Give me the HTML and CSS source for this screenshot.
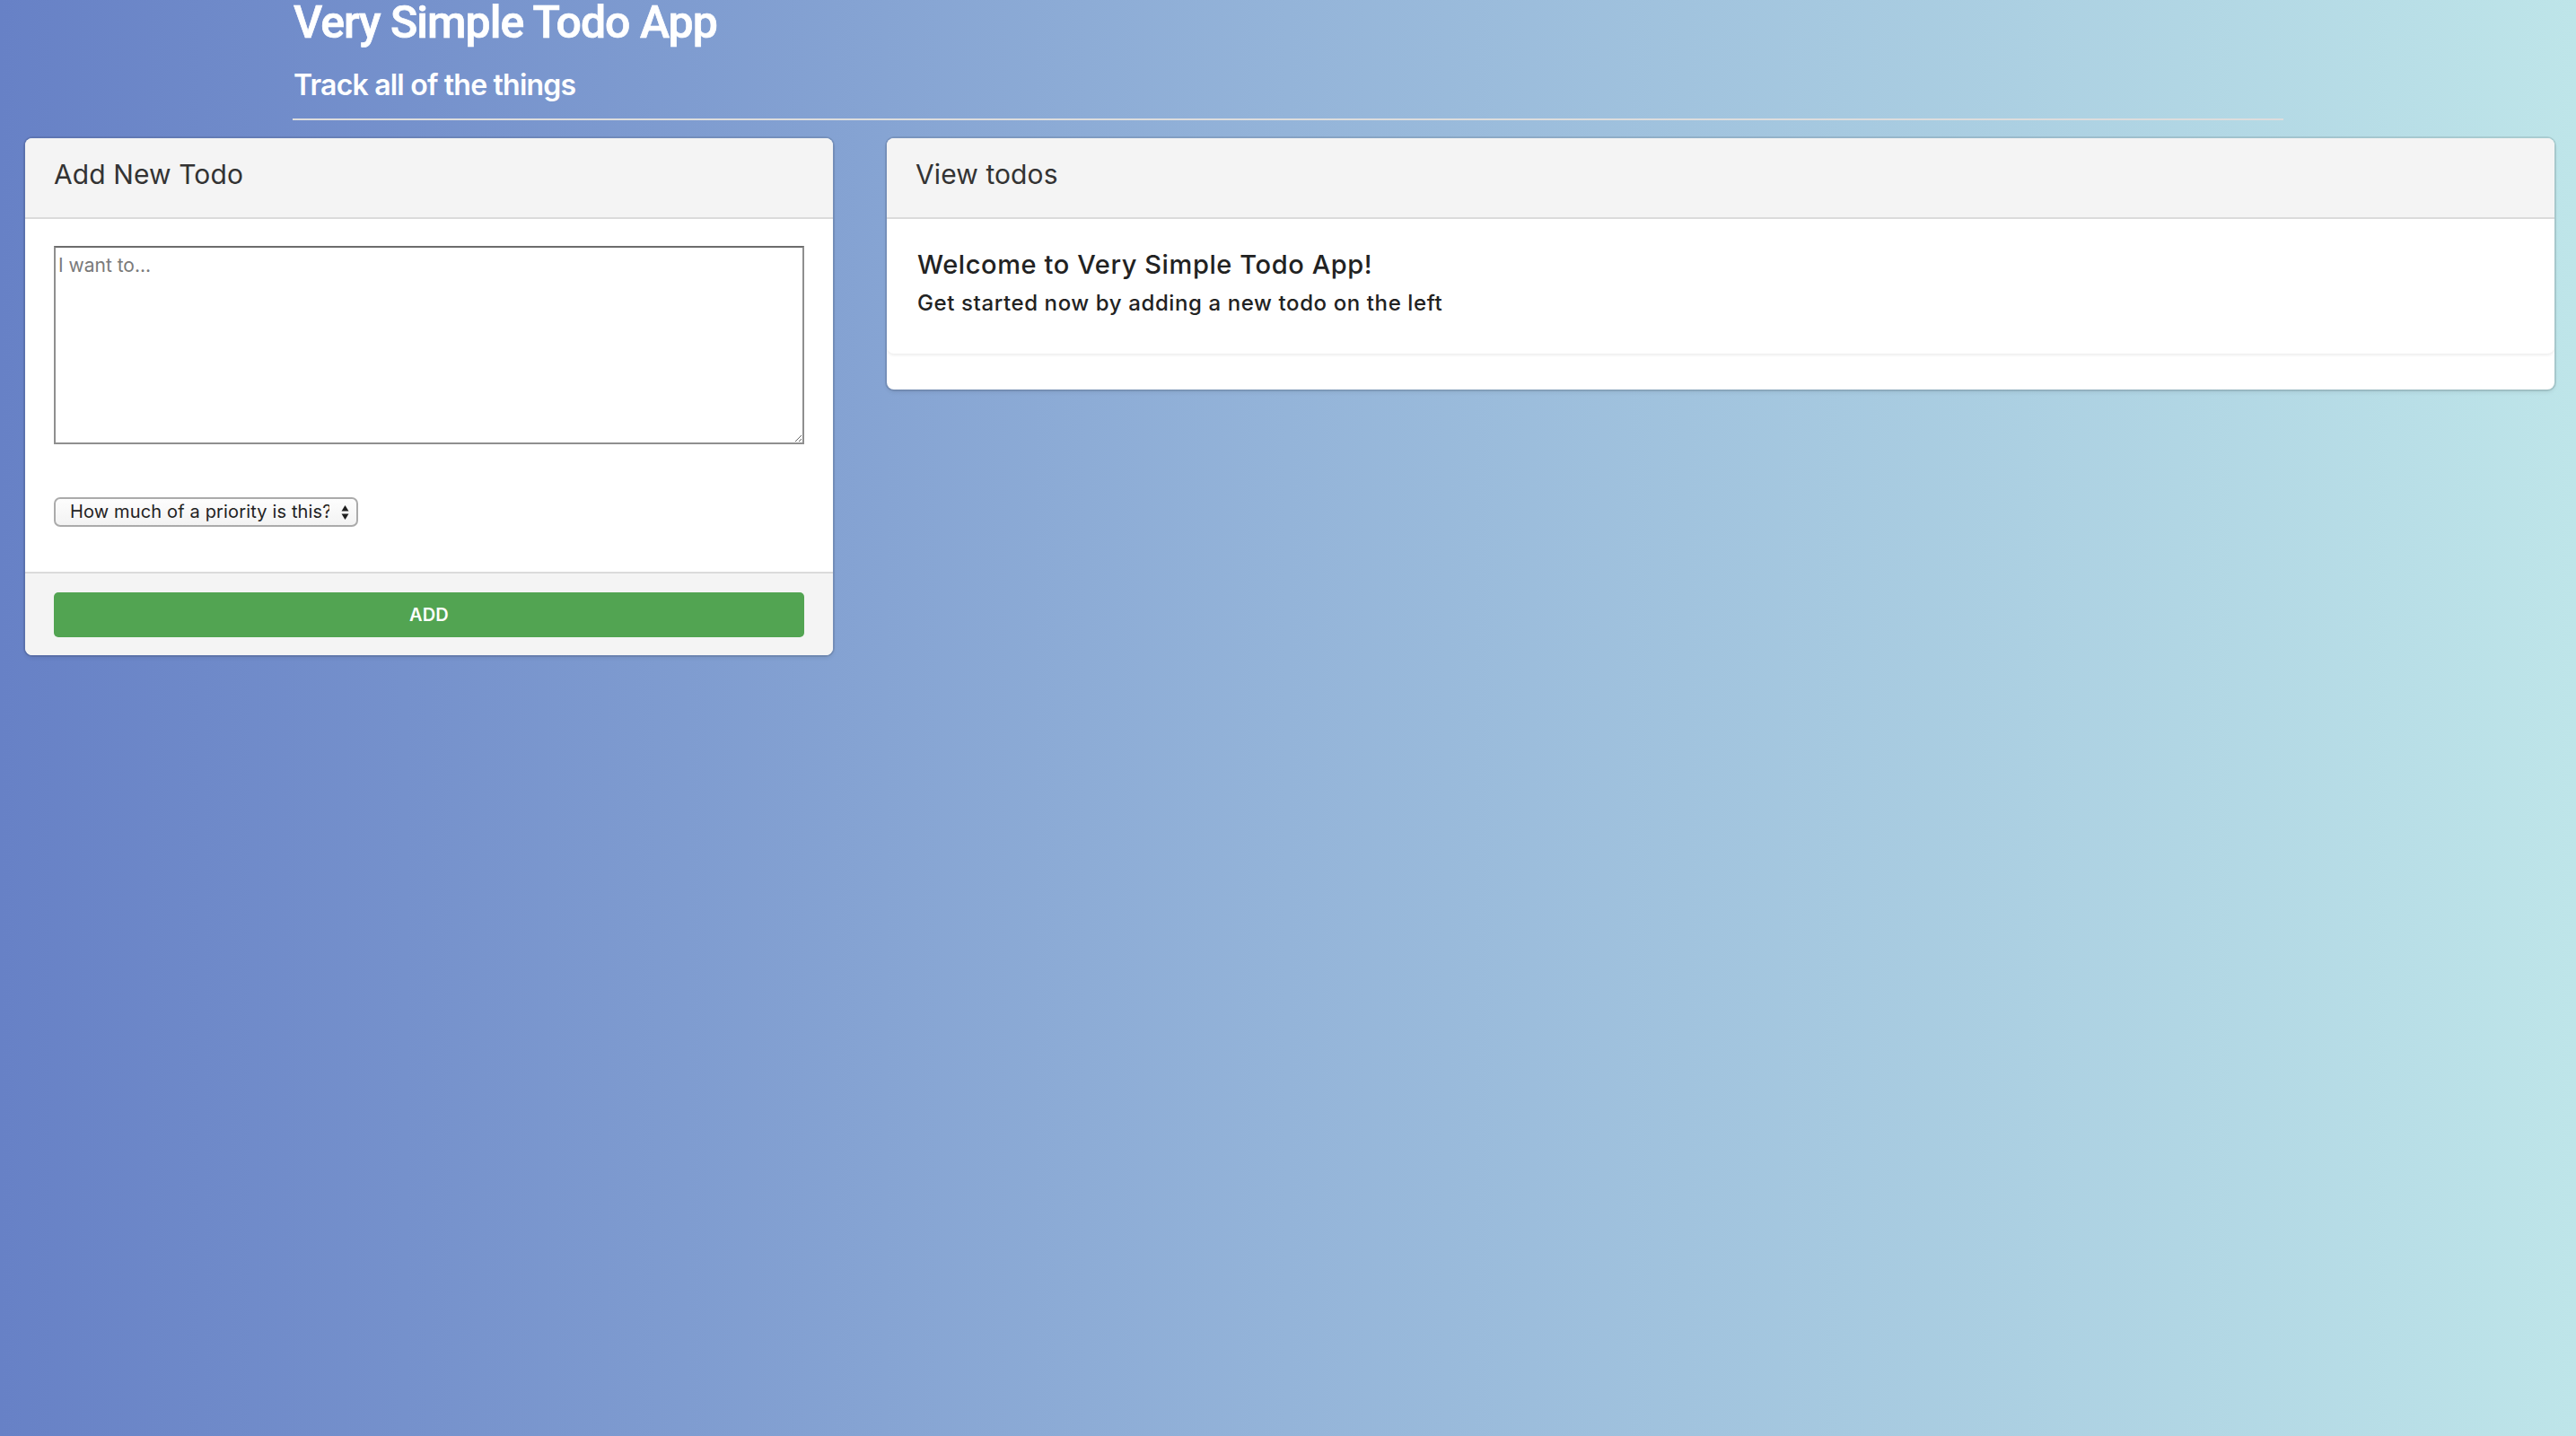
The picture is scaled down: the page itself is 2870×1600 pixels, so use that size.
FILE: index.html
```html
<!DOCTYPE html>
<html lang="en">
<head>
<meta charset="utf-8">
<title>Very Simple Todo App</title>
<link rel="stylesheet" href="styles.css">
</head>
<body>
  <header class="masthead">
    <h1 class="title">Very Simple Todo App</h1>
    <h2 class="subtitle">Track all of the things</h2>
    <hr class="rule">
  </header>
  <main class="columns">
    <section class="card card-add">
      <header class="card-header">
        <p class="card-header-title">Add New Todo</p>
      </header>
      <div class="card-content">
        <textarea class="todo-input" placeholder="I want to..."></textarea>
        <div class="select-wrap">
          <select class="priority">
            <option>How much of a priority is this?</option>
            <option>Low</option>
            <option>Medium</option>
            <option>High</option>
          </select>
          <svg class="select-arrows" width="9" height="18" viewBox="0 0 9 18" aria-hidden="true">
            <path d="M4.5 1 L8.5 7.5 L0.5 7.5 Z" fill="#1f1f1f"/>
            <path d="M4.5 17 L8.5 10.5 L0.5 10.5 Z" fill="#1f1f1f"/>
          </svg>
        </div>
      </div>
      <footer class="card-footer">
        <button class="btn-add" type="button">ADD</button>
      </footer>
    </section>
    <section class="card card-view">
      <header class="card-header">
        <p class="card-header-title">View todos</p>
      </header>
      <div class="welcome-box">
        <p class="welcome-title">Welcome to Very Simple Todo App!</p>
        <p class="welcome-text">Get started now by adding a new todo on the left</p>
      </div>
      <div class="card-spacer"></div>
    </section>
  </main>
</body>
</html>
```
FILE: styles.css
```css
* { box-sizing: border-box; }

html, body {
  margin: 0;
  padding: 0;
}

body {
  min-height: 1600px;
  background: linear-gradient(to right, #6781c6 0%, #94b4d9 50%, #bee5e9 100%);
  font-family: Inter, "Noto Sans", sans-serif;
  color: #363636;
}

.masthead {
  width: 2218px;
  margin: 0 auto;
  padding-left: 1px;
}

.title {
  margin: 0;
  font-family: Roboto, "Liberation Sans", sans-serif;
  font-weight: 500;
  font-size: 50px;
  line-height: 50px;
  letter-spacing: -1px;
  color: #ffffff;
  -webkit-text-stroke: 0.7px #ffffff;
}

.subtitle {
  margin: 25px 0 0;
  font-family: Inter, sans-serif;
  font-weight: 600;
  font-size: 32px;
  line-height: 40px;
  letter-spacing: -0.8px;
  color: #ffffff;
}

.rule {
  margin: 17px 0 0 -1px;
  border: 0;
  height: 2px;
  background: #dddddd;
}

.columns {
  display: flex;
  align-items: flex-start;
  gap: 60px;
  padding: 20px 24px 0 28px;
}

.card {
  background: #ffffff;
  border-radius: 8px;
  overflow: hidden;
  box-shadow: 0 0 0 2px rgba(10, 10, 10, 0.1), 0 3px 5px rgba(10, 10, 10, 0.08);
}

.card-add { width: 900px; flex: none; }
.card-view { flex: 1; }

.card-header {
  background: #f4f4f4;
  border-bottom: 2px solid #dbdbdb;
  height: 90px;
  padding: 22px 32px 0;
}

.card-header-title {
  margin: 0;
  font-size: 30px;
  line-height: 36px;
  font-weight: 400;
  letter-spacing: 0.1px;
  color: #333333;
}

.card-content {
  padding: 30px 32px 50px;
}

.todo-input {
  display: block;
  width: 836px;
  height: 221px;
  margin: 0 0 59px;
  padding: 7px 3px 4px;
  border: 2px solid #8f8f8f;
  border-top-color: #6c6c6c;
  border-radius: 0;
  font-family: Inter, sans-serif;
  font-size: 21px;
  line-height: 26px;
  color: #333333;
  resize: both;
  outline: none;
}

.todo-input::placeholder {
  color: #7a7a7a;
}

.select-wrap {
  position: relative;
  display: inline-block;
}

.priority {
  appearance: none;
  -webkit-appearance: none;
  display: block;
  width: 339px;
  height: 33px;
  padding: 0 30px 0 16px;
  border: 2px solid #ababab;
  border-radius: 7px;
  background: linear-gradient(#fdfdfd, #f3f3f3);
  font-family: Inter, sans-serif;
  font-size: 20px;
  line-height: 29px;
  letter-spacing: 0.15px;
  color: #222222;
  outline: none;
}

.select-arrows {
  position: absolute;
  right: 10px;
  top: 8px;
  pointer-events: none;
}

.card-footer {
  background: #f4f4f4;
  border-top: 2px solid #dbdbdb;
  padding: 21px 32px 20px;
}

.btn-add {
  display: block;
  width: 100%;
  height: 50px;
  border: 0;
  border-radius: 5px;
  background: #52a452;
  color: #ffffff;
  font-family: Inter, sans-serif;
  font-size: 20px;
  font-weight: 600;
  letter-spacing: 0.2px;
}

.welcome-box {
  background: #ffffff;
  border-radius: 0 0 8px 8px;
  box-shadow: 0 2px 3px rgba(10, 10, 10, 0.07);
  padding: 34px 34px 40px;
  height: 150px;
}

.welcome-title {
  margin: 0;
  font-size: 29px;
  line-height: 34px;
  font-weight: 500;
  letter-spacing: 0.6px;
  color: #222222;
}

.welcome-text {
  margin: 11px 0 0;
  font-size: 24px;
  line-height: 30px;
  font-weight: 500;
  letter-spacing: 0.6px;
  color: #222222;
}

.card-spacer {
  height: 40px;
}
```
